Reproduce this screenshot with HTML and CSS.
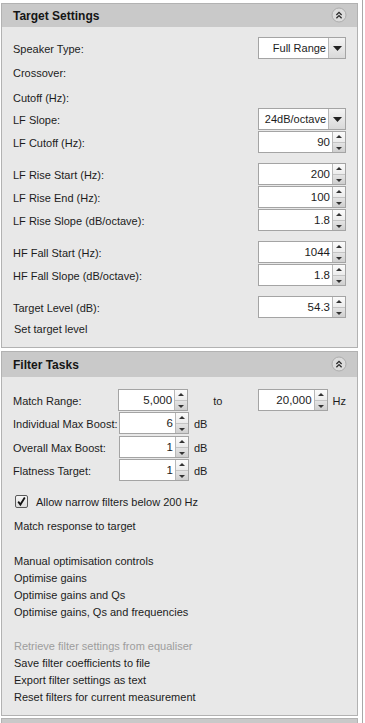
FILE: index.html
```html
<!DOCTYPE html>
<html>
<head>
<meta charset="utf-8">
<title>Target Settings</title>
<link rel="stylesheet" href="styles.css">
</head>
<body>
<div class="frame">
  <section class="panel">
    <div class="ph">
      <span class="pt">Target Settings</span>
      <svg class="collapse" width="16" height="16" viewBox="0 0 16 16"><circle cx="8" cy="8" r="7" fill="#dcdcdc" stroke="#adadad"/><polyline points="5.4,8 8,5.4 10.6,8" fill="none" stroke="#2a2a2a" stroke-width="1.3"/><polyline points="5.4,11.2 8,8.6 10.6,11.2" fill="none" stroke="#2a2a2a" stroke-width="1.3"/></svg>
    </div>
    <div class="pb pb1">
      <div class="row"><span class="lbl">Speaker Type:</span><div class="combo"><span class="cv">Full Range</span><span class="cbtn"><svg width="9" height="5" viewBox="0 0 9 5"><polygon points="0,0 9,0 4.5,5" fill="#222"/></svg></span></div></div>
      <div class="row m2"><span class="lbl">Crossover:</span></div>
      <div class="row m3"><span class="lbl">Cutoff (Hz):</span></div>
      <div class="row"><span class="lbl">LF Slope:</span><div class="combo"><span class="cv">24dB/octave</span><span class="cbtn"><svg width="9" height="5" viewBox="0 0 9 5"><polygon points="0,0 9,0 4.5,5" fill="#222"/></svg></span></div></div>
      <div class="row m1"><span class="lbl">LF Cutoff (Hz):</span><div class="spin"><span class="val">90</span><span class="sb"><span class="up"></span><span class="dn"></span></span></div></div>
      <div class="row m10"><span class="lbl">LF Rise Start (Hz):</span><div class="spin"><span class="val">200</span><span class="sb"><span class="up"></span><span class="dn"></span></span></div></div>
      <div class="row m1"><span class="lbl">LF Rise End (Hz):</span><div class="spin"><span class="val">100</span><span class="sb"><span class="up"></span><span class="dn"></span></span></div></div>
      <div class="row m1"><span class="lbl">LF Rise Slope (dB/octave):</span><div class="spin"><span class="val">1.8</span><span class="sb"><span class="up"></span><span class="dn"></span></span></div></div>
      <div class="row m10"><span class="lbl">HF Fall Start (Hz):</span><div class="spin"><span class="val">1044</span><span class="sb"><span class="up"></span><span class="dn"></span></span></div></div>
      <div class="row m1"><span class="lbl">HF Fall Slope (dB/octave):</span><div class="spin"><span class="val">1.8</span><span class="sb"><span class="up"></span><span class="dn"></span></span></div></div>
      <div class="row m10"><span class="lbl">Target Level (dB):</span><div class="spin"><span class="val">54.3</span><span class="sb"><span class="up"></span><span class="dn"></span></span></div></div>
      <div class="link settarget">Set target level</div>
    </div>
  </section>

  <section class="panel gap">
    <div class="ph ph2">
      <span class="pt">Filter Tasks</span>
      <svg class="collapse" width="16" height="16" viewBox="0 0 16 16"><circle cx="8" cy="8" r="7" fill="#dcdcdc" stroke="#adadad"/><polyline points="5.4,8 8,5.4 10.6,8" fill="none" stroke="#2a2a2a" stroke-width="1.3"/><polyline points="5.4,11.2 8,8.6 10.6,11.2" fill="none" stroke="#2a2a2a" stroke-width="1.3"/></svg>
    </div>
    <div class="pb pb2">
      <div class="frow"><span class="flbl">Match Range:</span><div class="spin small"><span class="val">5,000</span><span class="sb"><span class="up"></span><span class="dn"></span></span></div><span class="to">to</span><div class="spin small"><span class="val">20,000</span><span class="sb"><span class="up"></span><span class="dn"></span></span></div><span class="unit">Hz</span></div>
      <div class="frow m1"><span class="flbl">Individual Max Boost:</span><div class="spin small"><span class="val">6</span><span class="sb"><span class="up"></span><span class="dn"></span></span></div><span class="unit">dB</span></div>
      <div class="frow m2"><span class="flbl">Overall Max Boost:</span><div class="spin small"><span class="val">1</span><span class="sb"><span class="up"></span><span class="dn"></span></span></div><span class="unit">dB</span></div>
      <div class="frow m1"><span class="flbl">Flatness Target:</span><div class="spin small"><span class="val">1</span><span class="sb"><span class="up"></span><span class="dn"></span></span></div><span class="unit">dB</span></div>
      <div class="chkrow"><span class="chk"><svg width="11" height="11" viewBox="0 0 11 11"><polyline points="2.2,5.6 4.4,8.6 8.8,1.6" fill="none" stroke="#111" stroke-width="1.8"/></svg></span><span class="chktext">Allow narrow filters below 200 Hz</span></div>
      <div class="link matchresp">Match response to target</div>
      <div class="links group1">
        <div class="link">Manual optimisation controls</div>
        <div class="link">Optimise gains</div>
        <div class="link">Optimise gains and Qs</div>
        <div class="link">Optimise gains, Qs and frequencies</div>
      </div>
      <div class="links group2">
        <div class="link disabled">Retrieve filter settings from equaliser</div>
        <div class="link">Save filter coefficients to file</div>
        <div class="link">Export filter settings as text</div>
        <div class="link">Reset filters for current measurement</div>
      </div>
    </div>
  </section>

  <section class="panel gap3">
    <div class="ph"></div>
  </section>
</div>
</body>
</html>
```

FILE: styles.css
```css
html, body {
  margin: 0;
  padding: 0;
  background: #ffffff;
  overflow: hidden;
}

.frame {
  box-sizing: border-box;
  width: 363px;
  height: 723px;
  overflow: hidden;
  border-right: 1px solid #a8a8a8;
  padding-top: 3px;
  font-family: "Liberation Sans", Arial, sans-serif;
  font-size: 11px;
  color: #1c1c1c;
}

.panel {
  box-sizing: border-box;
  width: 357px;
  margin-left: 1px;
  border: 1px solid #b2b2b2;
  background: #e8e8e8;
}

.panel.gap {
  margin-top: 3px;
}

.panel.gap3 {
  margin-top: 2px;
}

.ph {
  height: 23px;
  background: #c9c9c9;
  display: flex;
  align-items: center;
  justify-content: space-between;
  padding: 0 10px 0 11px;
}

.ph2 {
  height: 25px;
}

.pt {
  font-weight: bold;
  font-size: 12px;
  color: #151515;
  padding-top: 1px;
}

.collapse {
  display: block;
  margin-top: -2px;
}

.pb {
  padding: 0 11px 0 11px;
}

.pb1 {
  padding-top: 10px;
  padding-bottom: 10px;
}

.pb2 {
  padding-top: 12px;
  padding-bottom: 10px;
}

.row {
  height: 22px;
  display: flex;
  align-items: center;
  justify-content: space-between;
}

.m1 { margin-top: 1px; }
.m2 { margin-top: 2px; }
.m3 { margin-top: 3px; }
.m10 { margin-top: 10px; }

.lbl {
  white-space: nowrap;
  padding-top: 2px;
}

.combo {
  box-sizing: border-box;
  width: 88px;
  height: 22px;
  border: 1px solid #a4a4a4;
  background: #ffffff;
  display: flex;
}

.cv {
  flex: 1;
  text-align: right;
  line-height: 21px;
  padding-right: 2px;
  white-space: nowrap;
}

.cbtn {
  width: 16px;
  border-left: 1px solid #b8b8b8;
  background: linear-gradient(#f4f4f4, #d9d9d9);
  display: flex;
  align-items: center;
  justify-content: center;
}

.spin {
  box-sizing: border-box;
  width: 88px;
  height: 22px;
  border: 1px solid #a4a4a4;
  background: #ffffff;
  display: flex;
}

.spin.small {
  width: 70px;
}

.val {
  flex: 1;
  text-align: right;
  line-height: 21px;
  padding-right: 2px;
  font-size: 11.5px;
}

.sb {
  width: 12px;
  border-left: 1px solid #b8b8b8;
  display: flex;
  flex-direction: column;
}

.up, .dn {
  flex: 1;
  position: relative;
}

.up {
  background: linear-gradient(#fbfbfb, #ececec);
  border-bottom: 1px solid #c4c4c4;
}

.dn {
  background: linear-gradient(#e4e4e4, #cfcfcf);
}

.up::after, .dn::after {
  content: "";
  position: absolute;
  left: 3px;
  width: 0;
  height: 0;
  border-left: 3px solid transparent;
  border-right: 3px solid transparent;
}

.up::after {
  top: 3px;
  border-bottom: 3px solid #333;
}

.dn::after {
  top: 4px;
  border-top: 3px solid #333;
}

.frow {
  height: 22px;
  display: flex;
  align-items: center;
}

.flbl {
  width: 106px;
  white-space: nowrap;
  padding-top: 2px;
}

.to {
  width: 45px;
  padding-left: 25px;
  padding-top: 2px;
}

.unit {
  margin-left: 5px;
  padding-top: 2px;
}

.chkrow {
  margin-top: 11px;
  height: 18px;
  display: flex;
  align-items: center;
  padding-left: 2px;
}

.chktext {
  padding-top: 2px;
}

.chk {
  box-sizing: border-box;
  width: 13px;
  height: 13px;
  border: 1px solid #5a5a5a;
  border-radius: 2px;
  background: linear-gradient(#f6f6f6, #dcdcdc);
  display: flex;
  align-items: center;
  justify-content: center;
  margin-right: 8px;
}

.link {
  height: 17px;
  line-height: 19px;
  padding-left: 1px;
  white-space: nowrap;
}

.settarget {
  margin-top: 1px;
  height: 18px;
  line-height: 20px;
}

.matchresp {
  margin-top: 7px;
}

.group1 {
  margin-top: 18px;
}

.group2 {
  margin-top: 17px;
}

.link.disabled {
  color: #9d9d9d;
}
```
